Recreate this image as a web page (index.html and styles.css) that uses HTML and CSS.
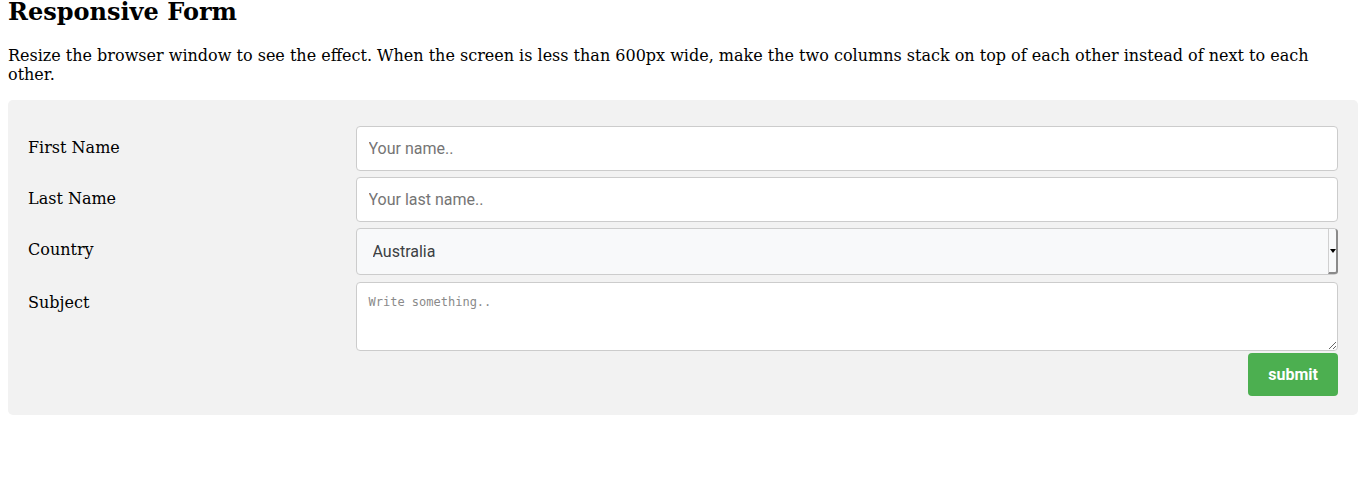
FILE: index.html
```html
<!DOCTYPE html>
<html>
<head>
<meta charset="utf-8">
<link rel="stylesheet" href="styles.css">
</head>
<body>
<h2 class="title">Responsive Form</h2>
<p class="intro">Resize the browser window to see the effect. When the screen is less than 600px wide, make the two columns stack on top of each other instead of next to each other.</p>
<div class="container">
  <form class="form">
    <div class="row">
      <div class="col-label"><label class="label" for="fname">First Name</label></div>
      <div class="col-field"><input class="field" type="text" id="fname" placeholder="Your name.."></div>
    </div>
    <div class="row">
      <div class="col-label"><label class="label" for="lname">Last Name</label></div>
      <div class="col-field"><input class="field" type="text" id="lname" placeholder="Your last name.."></div>
    </div>
    <div class="row">
      <div class="col-label"><label class="label" for="country">Country</label></div>
      <div class="col-field select-wrap">
        <select class="field select" id="country">
          <option>Australia</option>
          <option>Canada</option>
          <option>USA</option>
        </select>
        <span class="select-arrow"></span>
      </div>
    </div>
    <div class="row">
      <div class="col-label"><label class="label" for="subject">Subject</label></div>
      <div class="col-field"><textarea class="field area" id="subject" placeholder="Write something.."></textarea></div>
    </div>
    <div class="actions">
      <input class="submit" type="submit" value="submit">
    </div>
  </form>
</div>
</body>
</html>
```

FILE: styles.css
```css
* { box-sizing: border-box; }

body {
  margin: 0 7px 8px 8px;
  font-family: "DejaVu Serif", serif;
  font-size: 16px;
  color: #000;
  background: #fff;
}

.title {
  font-size: 24px;
  font-weight: bold;
  margin: 0 0 22px;
  line-height: 24px;
}

.intro {
  margin: 0 0 16px;
  line-height: 19px;
}

.container {
  background: #f2f2f2;
  border-radius: 5px;
  padding: 20px 20px 19px;
}

.row {
  display: flex;
  margin-top: 6px;
}

.col-label {
  width: 25%;
  flex: none;
}

.col-field {
  width: 75%;
  flex: none;
}

.label {
  display: inline-block;
  padding: 12px 12px 12px 0;
  line-height: 19px;
}

.field {
  display: block;
  width: 100%;
  margin: 0;
  padding: 12px;
  border: 1px solid #ccc;
  border-radius: 4px;
  font-family: Roboto, "Liberation Sans", sans-serif;
  font-size: 16px;
  color: #333;
  background: #fff;
  outline: none;
}

input.field { height: 45px; }

.field::placeholder { color: #757575; }

.select-wrap { position: relative; }

.select {
  appearance: none;
  -webkit-appearance: none;
  height: 47px;
  padding: 0 16px;
  background: #f8f9fa;
  color: #3c4043;
}

.select-arrow {
  position: absolute;
  right: 0;
  top: 1px;
  width: 10px;
  height: 45px;
  border-left: 1px solid #d0d0d0;
  border-right: 2px solid #8a8a8a;
  border-bottom: 2px solid #8a8a8a;
  border-radius: 0 3px 3px 0;
  background: #f8f9fa;
}

.select-arrow::after {
  content: "";
  position: absolute;
  left: 1px;
  top: 20px;
  border-left: 3px solid transparent;
  border-right: 3px solid transparent;
  border-top: 4px solid #000;
}

.area {
  height: 69px;
  margin: 1px 0 2px;
  padding: 12px;
  font-family: "DejaVu Sans Mono", monospace;
  font-size: 12px;
  resize: vertical;
}

.area::placeholder { color: #8a8a8a; }

.actions {
  display: flex;
  justify-content: flex-end;
}

.submit {
  margin: 0;
  height: 43px;
  padding: 0 20px;
  border: none;
  border-radius: 4px;
  background: #4caf50;
  color: #fff;
  font-family: Roboto, "Liberation Sans", sans-serif;
  font-size: 16px;
  font-weight: bold;
  cursor: pointer;
}
```
